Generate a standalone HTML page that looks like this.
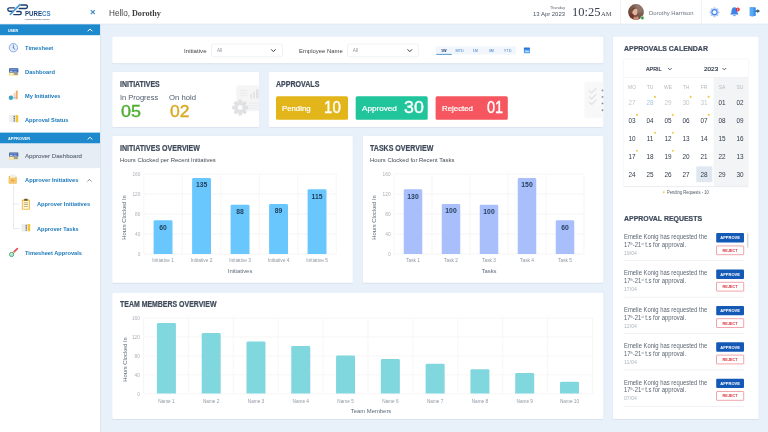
<!DOCTYPE html>
<html lang="en"><head><meta charset="utf-8"><title>PureCS Dashboard</title>
<style>
html,body{margin:0;padding:0;width:768px;height:432px;overflow:hidden;background:#e8f0fa;font-family:"Liberation Sans",sans-serif;}
#app{position:relative;width:768px;height:432px;overflow:hidden;will-change:transform;}
.t{position:absolute;white-space:nowrap;margin:0;padding:0;}
.r{position:absolute;}
.s{position:absolute;left:0;top:0;pointer-events:none;overflow:visible;}
.sup{font-size:45%;vertical-align:baseline;position:relative;top:-0.62em;line-height:0;}
</style></head><body><div id="app">
<svg class="s" width="768" height="432" viewBox="0 0 768 432"><rect x="0.00" y="0.00" width="768.00" height="432.00" fill="#e8f0fa"/><rect x="0.00" y="0.00" width="768.00" height="24.00" fill="#fff"/><rect x="0.00" y="23.70" width="768.00" height="0.70" fill="#dde5ef"/><rect x="0.00" y="24.00" width="100.00" height="408.00" fill="#fff"/><rect x="100.00" y="24.30" width="0.90" height="408.00" fill="#dfe4eb"/><rect x="0.00" y="24.30" width="100.00" height="10.90" fill="#1e89cd"/></svg>
<div class="t" style="left:8.00px;top:28.32px;font:700 4.30px/5.16px 'Liberation Sans',sans-serif;color:#fff;transform:scaleX(0.8370);transform-origin:0 3.68px;">USER</div>
<svg class="s" width="768" height="432" viewBox="0 0 768 432"><rect x="0.00" y="132.60" width="100.00" height="10.90" fill="#1e89cd"/></svg>
<div class="t" style="left:8.00px;top:136.32px;font:700 4.30px/5.16px 'Liberation Sans',sans-serif;color:#fff;transform:scaleX(0.9116);transform-origin:0 3.68px;">APPROVER</div>
<svg class="s" width="768" height="432"><path d="M88.00 31.00 L90.00 29.00 L92.00 31.00" fill="none" stroke="#fff" stroke-width="1.00" stroke-linecap="round" stroke-linejoin="round"/></svg>
<svg class="s" width="768" height="432"><path d="M88.00 139.20 L90.00 137.20 L92.00 139.20" fill="none" stroke="#fff" stroke-width="1.00" stroke-linecap="round" stroke-linejoin="round"/></svg>
<div class="t" style="left:25.00px;top:44.86px;font:700 5.90px/7.08px 'Liberation Sans',sans-serif;color:#1a78ba;transform:scaleX(0.9733);transform-origin:0 5.14px;">Timesheet</div>
<div class="t" style="left:25.00px;top:68.86px;font:700 5.90px/7.08px 'Liberation Sans',sans-serif;color:#1a78ba;transform:scaleX(0.9735);transform-origin:0 5.14px;">Dashboard</div>
<div class="t" style="left:25.00px;top:92.86px;font:700 5.90px/7.08px 'Liberation Sans',sans-serif;color:#1a78ba;transform:scaleX(0.9581);transform-origin:0 5.14px;">My Initiatives</div>
<div class="t" style="left:25.00px;top:116.86px;font:700 5.90px/7.08px 'Liberation Sans',sans-serif;color:#1a78ba;transform:scaleX(0.9615);transform-origin:0 5.14px;">Approval Status</div>
<svg class="s" width="768" height="432" viewBox="0 0 768 432"><rect x="0.00" y="143.60" width="100.00" height="24.60" fill="#e7edf5"/></svg>
<div class="t" style="left:25.00px;top:152.86px;font:400 5.90px/7.08px 'Liberation Sans',sans-serif;color:#65717e;transform:scaleX(1.0469);transform-origin:0 5.14px;-webkit-text-stroke:.15px currentColor;">Approver Dashboard</div>
<div class="t" style="left:25.00px;top:176.86px;font:700 5.90px/7.08px 'Liberation Sans',sans-serif;color:#1a78ba;transform:scaleX(0.9713);transform-origin:0 5.14px;">Approver Initiatives</div>
<svg class="s" width="768" height="432"><path d="M87.70 181.20 L89.50 179.40 L91.30 181.20" fill="none" stroke="#5d6b7a" stroke-width="0.80" stroke-linecap="round" stroke-linejoin="round"/></svg>
<div class="t" style="left:37.30px;top:200.86px;font:700 5.90px/7.08px 'Liberation Sans',sans-serif;color:#1a78ba;transform:scaleX(0.9658);transform-origin:0 5.14px;">Approver Initiatives</div>
<div class="t" style="left:37.30px;top:225.86px;font:700 5.90px/7.08px 'Liberation Sans',sans-serif;color:#1a78ba;transform:scaleX(0.9443);transform-origin:0 5.14px;">Approver Tasks</div>
<div class="t" style="left:25.00px;top:249.86px;font:700 5.90px/7.08px 'Liberation Sans',sans-serif;color:#1a78ba;transform:scaleX(0.9604);transform-origin:0 5.14px;">Timesheet Approvals</div>
<svg class="s" width="768" height="432" viewBox="0 0 768 432"><rect x="13.00" y="185.00" width="0.70" height="43.60" fill="#dde2e8"/><rect x="13.00" y="203.60" width="6.60" height="0.70" fill="#dde2e8"/><rect x="13.00" y="228.00" width="6.60" height="0.70" fill="#dde2e8"/></svg>
<svg class="s" width="768" height="432" viewBox="0 0 768 432"><g fill="none" stroke-linecap="round" stroke-linejoin="round"><path d="M14.4 7.8 H9.5 A1.7 1.7 0 0 0 9.5 11.2 H12.6" stroke="#1b3d70" stroke-width="1.35"/><path d="M20.8 5.0 H25.7 A1.75 1.75 0 0 1 25.7 8.5 H19.2" stroke="#1b3d70" stroke-width="1.35"/><path d="M16.8 11.5 H19.7 A1.55 1.55 0 0 1 19.7 14.6 H13.8" stroke="#1b3d70" stroke-width="1.35"/><path d="M10.3 14.3 L19.9 4.7" stroke="#4b9bd2" stroke-width="1.7"/></g><circle cx="13.4" cy="47.7" r="4.2" fill="#e6eefb" stroke="#6f9ae0" stroke-width=".8"/><path d="M13.4 45.1 V47.9 L15 49.3" fill="none" stroke="#4a79cb" stroke-width=".8" stroke-linecap="round"/><circle cx="13.4" cy="47.8" r=".6" fill="#3e68b8"/><rect x="9.10" y="68.30" width="9.2" height="7.2" rx=".5" fill="#f3d678"/><path d="M9.60 68.30 h8.2 a.5 .5 0 0 1 .5 .5 v3.7 h-9.2 v-3.7 a.5 .5 0 0 1 .5 -.5z" fill="#3b62b6"/><rect x="10.00" y="69.40" width="7.4" height=".7" fill="#8fabe6"/><rect x="10.00" y="70.80" width="2.6" height=".9" fill="#dfe8fa"/><rect x="13.50" y="70.80" width="3.2" height=".9" fill="#9db6ea"/><rect x="10.00" y="73.20" width="3.0" height="1.5" fill="#fdf3cf"/><rect x="14.30" y="73.20" width="1.4" height="1.5" fill="#4a73c6"/><rect x="16.20" y="73.20" width="1.3" height="1.5" fill="#4a73c6"/><rect x="11.6" y="94.6" width="1.7" height="4.6" fill="#f7e2d2"/><rect x="13.7" y="92.8" width="1.7" height="6.4" fill="#f5d3b8"/><rect x="15.8" y="90.6" width="1.9" height="8.6" fill="#f1a868"/><rect x="13.4" y="97" width="2.4" height="1.6" fill="#b9c6dc"/><circle cx="10.9" cy="97.7" r="2.2" fill="#3ba6cb"/><rect x="9.40" y="115.00" width="3.7" height="7.3" rx=".4" fill="#ededf0"/><rect x="13.30" y="115.00" width="2.0" height="7.3" fill="#cfd2d7"/><rect x="13.65" y="116.00" width="1.3" height="1.3" fill="#70757c"/><rect x="13.65" y="118.10" width="1.3" height="1.3" fill="#70757c"/><rect x="13.65" y="120.20" width="1.3" height="1.3" fill="#8a8e95"/><rect x="15.70" y="114.90" width="2.5" height="7.3" rx=".4" fill="#f4c52e"/><rect x="9.10" y="152.40" width="9.2" height="7.2" rx=".5" fill="#f3d678"/><path d="M9.60 152.40 h8.2 a.5 .5 0 0 1 .5 .5 v3.7 h-9.2 v-3.7 a.5 .5 0 0 1 .5 -.5z" fill="#3b62b6"/><rect x="10.00" y="153.50" width="7.4" height=".7" fill="#8fabe6"/><rect x="10.00" y="154.90" width="2.6" height=".9" fill="#dfe8fa"/><rect x="13.50" y="154.90" width="3.2" height=".9" fill="#9db6ea"/><rect x="10.00" y="157.30" width="3.0" height="1.5" fill="#fdf3cf"/><rect x="14.30" y="157.30" width="1.4" height="1.5" fill="#4a73c6"/><rect x="16.20" y="157.30" width="1.3" height="1.5" fill="#4a73c6"/><path d="M8.8 176 H11.4 L12.2 176.8 H16.6 V183.6 H8.8 Z" fill="#edb152"/><rect x="10" y="174.6" width="5.4" height="3.6" fill="#f3efe6"/><rect x="8.8" y="177.7" width="7.8" height="5.9" rx=".5" fill="#f6c56c"/><rect x="11.2" y="179.8" width="3" height="1.5" fill="#e3a548"/><rect x="21.8" y="199.6" width="8.2" height="10.2" rx=".7" fill="#f2c24a"/><rect x="22.9" y="201" width="6" height="7.8" fill="#fdf6dc"/><rect x="24.2" y="198.7" width="3.4" height="2.0" rx=".5" fill="#6b5a33"/><rect x="23.8" y="202.6" width="4.2" height=".6" fill="#9b8a57"/><rect x="23.8" y="204.3" width="4.2" height=".6" fill="#9b8a57"/><rect x="23.8" y="206.0" width="4.2" height=".6" fill="#9b8a57"/><rect x="21.40" y="224.10" width="3.7" height="7.3" rx=".4" fill="#ededf0"/><rect x="25.30" y="224.10" width="2.0" height="7.3" fill="#cfd2d7"/><rect x="25.65" y="225.10" width="1.3" height="1.3" fill="#70757c"/><rect x="25.65" y="227.20" width="1.3" height="1.3" fill="#70757c"/><rect x="25.65" y="229.30" width="1.3" height="1.3" fill="#8a8e95"/><rect x="27.70" y="224.00" width="2.5" height="7.3" rx=".4" fill="#f4c52e"/><path d="M13.8 252.2 L17.3 248.7" stroke="#e5524e" stroke-width="1.7" stroke-linecap="round"/><path d="M12.8 253.3 L13.8 252.2" stroke="#f2b96a" stroke-width="1.4" stroke-linecap="round"/><circle cx="11.6" cy="254.5" r="2.1" fill="#e6f7ee" stroke="#34a56c" stroke-width=".95"/><path d="M10.7 254.5 L11.4 255.2 L12.6 253.9" fill="none" stroke="#34a56c" stroke-width=".6"/></svg>
<div class="t" style="left:24.90px;top:10.86px;font:700 5.90px/7.08px 'Liberation Sans',sans-serif;color:#1c3f74;transform:scaleX(1.0411) scaleY(1.1400);transform-origin:0 5.14px;">PURE<span style="color:#3a80c4">CS</span></div>
<div class="t" style="left:24.30px;top:18.02px;font:400 2.30px/2.76px 'Liberation Sans',sans-serif;color:#2c3646;transform:scaleX(0.7751);transform-origin:0 1.98px;">A Thinking Technology Company</div>
<div class="t" style="left:108.50px;top:8.98px;font:400 8.20px/9.84px 'Liberation Sans',sans-serif;color:#444;transform:scaleX(1.0017);transform-origin:0 7.02px;">Hello,</div>
<div class="t" style="left:132.30px;top:8.98px;font:700 8.20px/9.84px 'Liberation Serif',serif;color:#3d3d3d;transform:scaleX(0.9929);transform-origin:0 7.02px;">Dorothy</div>
<div class="t" style="left:550.20px;top:5.56px;font:400 3.90px/4.68px 'Liberation Sans',sans-serif;color:#5a6270;transform:scaleX(0.9227);transform-origin:0 3.44px;">Thursday</div>
<div class="t" style="left:533.30px;top:10.80px;font:400 6.00px/7.20px 'Liberation Sans',sans-serif;color:#4a5260;transform:scaleX(0.9888);transform-origin:0 5.20px;">13 Apr 2023</div>
<div class="t" style="left:572.10px;top:4.84px;font:400 12.60px/15.12px 'Liberation Serif',serif;color:#39414e;transform:scaleX(0.9930);transform-origin:0 11.16px;">10:25</div>
<div class="t" style="left:600.90px;top:10.18px;font:400 6.20px/7.44px 'Liberation Serif',serif;color:#4a515d;transform:scaleX(1.0710);transform-origin:0 5.82px;">AM</div>
<svg class="s" width="768" height="432" viewBox="0 0 768 432"><rect x="620.20" y="0.00" width="0.60" height="24.00" fill="#e6e9ee"/><rect x="701.20" y="0.00" width="0.60" height="24.00" fill="#e6e9ee"/></svg>
<div class="t" style="left:648.70px;top:9.92px;font:400 5.80px/6.96px 'Liberation Sans',sans-serif;color:#6a7480;transform:scaleX(1.0151);transform-origin:0 5.08px;">Dorothy Harrison</div>
<svg class="s" width="768" height="432" viewBox="0 0 768 432"><defs><clipPath id="av"><circle cx="636" cy="12" r="7.9"/></clipPath><radialGradient id="avg" cx=".7" cy=".25" r=".9"><stop offset="0" stop-color="#a08a80"/><stop offset=".45" stop-color="#7a5a4c"/><stop offset="1" stop-color="#5c3326"/></radialGradient><filter id="avb" x="-20%" y="-20%" width="140%" height="140%"><feGaussianBlur stdDeviation=".55"/></filter></defs><g clip-path="url(#av)"><rect x="627" y="3" width="18" height="18" fill="url(#avg)"/><g filter="url(#avb)"><ellipse cx="634.8" cy="11.6" rx="2.7" ry="3.7" fill="#e2b39b"/><path d="M633 15.5 Q635.5 18.5 638 16 L639.5 21 H631Z" fill="#c98f78"/><path d="M631.4 10 Q633.5 6.2 638 8.4 Q635.6 8.2 634 9.6 Q632.6 10.6 632 13Z" fill="#6d4839"/><ellipse cx="639.6" cy="9" rx="2" ry="3.2" fill="#907468"/><ellipse cx="631.6" cy="16.5" rx="2.4" ry="3" fill="#74382a"/></g></g><rect x="640.9" y="16.3" width="3" height="3.2" rx=".8" fill="#2f9d3f" stroke="#f3fbf3" stroke-width=".5"/><g transform="translate(714.5 12.2)"><circle r="4.4" fill="#dbe8fc"/><rect x="-1" y="-5" width="2" height="2.2" rx=".5" fill="#b4cdf7" transform="rotate(0)"/><rect x="-1" y="-5" width="2" height="2.2" rx=".5" fill="#b4cdf7" transform="rotate(45)"/><rect x="-1" y="-5" width="2" height="2.2" rx=".5" fill="#b4cdf7" transform="rotate(90)"/><rect x="-1" y="-5" width="2" height="2.2" rx=".5" fill="#b4cdf7" transform="rotate(135)"/><rect x="-1" y="-5" width="2" height="2.2" rx=".5" fill="#b4cdf7" transform="rotate(180)"/><rect x="-1" y="-5" width="2" height="2.2" rx=".5" fill="#b4cdf7" transform="rotate(225)"/><rect x="-1" y="-5" width="2" height="2.2" rx=".5" fill="#b4cdf7" transform="rotate(270)"/><rect x="-1" y="-5" width="2" height="2.2" rx=".5" fill="#b4cdf7" transform="rotate(315)"/><circle r="3.1" fill="#4c88ea"/><circle r="1.9" fill="#f6f9ff"/></g><path d="M734.4 7.2 C731.6 7.2 731.6 10.6 731.4 12.2 C731.2 13.4 730.4 13.8 730.3 14.6 H738.6 C738.4 13.8 737.6 13.4 737.4 12.2 C737.2 10.6 737.2 7.2 734.4 7.2Z" fill="#3d83e6"/><path d="M733 15.2 A1.5 1.5 0 0 0 735.9 15.2Z" fill="#3d83e6"/><circle cx="737.8" cy="9.5" r="1.9" fill="#e0212b"/><rect x="737.4" y="8.5" width=".8" height="2" fill="#fff"/><path d="M749.8 7.3 H755 A.8 .8 0 0 1 755.8 8.1 V15.2 A.8 .8 0 0 1 755 16 H749.8Z" fill="#3f8fe8"/><path d="M749.8 7.3 L753.4 8.3 V16.8 L749.8 16Z" fill="#56adf4"/><path d="M755.4 10.2 H757.4 V8.9 L760 11.1 L757.4 13.3 V12 H755.4Z" fill="#3b647f"/></svg>
<svg class="s" width="768" height="432"><path d="M90.8 10.2 L94.8 14.2 M94.8 10.2 L90.8 14.2" stroke="#3a87c4" stroke-width="1.2" stroke-linecap="butt"/></svg>
<svg class="s" width="768" height="432" viewBox="0 0 768 432"><rect x="111.95" y="36.05" width="491.80" height="27.70" rx="1.3" fill="#dfe7f2"/><rect x="112.60" y="62.70" width="490.50" height="1.50" rx=".8" fill="#d8e1ed"/><rect x="112.30" y="36.40" width="491.10" height="26.90" rx="1.00" fill="#fff"/></svg>
<div class="t" style="left:184.20px;top:47.86px;font:400 5.90px/7.08px 'Liberation Sans',sans-serif;color:#444;transform:scaleX(1.0442);transform-origin:0 5.14px;">Initiative</div>
<svg class="s" width="768" height="432" viewBox="0 0 768 432"><rect x="211.60" y="44.10" width="70.80" height="12.80" rx="1.50" fill="#fff" stroke="#e3e7ec" stroke-width="0.60"/></svg>
<div class="t" style="left:217.00px;top:48.14px;font:400 4.60px/5.52px 'Liberation Sans',sans-serif;color:#8a8f96;">All</div>
<svg class="s" width="768" height="432"><path d="M271.40 49.60 L273.40 51.60 L275.40 49.60" fill="none" stroke="#3a3a3a" stroke-width="1.00" stroke-linecap="round" stroke-linejoin="round"/></svg>
<div class="t" style="left:299.00px;top:47.86px;font:400 5.90px/7.08px 'Liberation Sans',sans-serif;color:#444;transform:scaleX(1.0042);transform-origin:0 5.14px;">Employee Name</div>
<svg class="s" width="768" height="432" viewBox="0 0 768 432"><rect x="347.50" y="44.10" width="70.80" height="12.80" rx="1.50" fill="#fff" stroke="#e3e7ec" stroke-width="0.60"/></svg>
<div class="t" style="left:352.80px;top:48.14px;font:400 4.60px/5.52px 'Liberation Sans',sans-serif;color:#8a8f96;">All</div>
<svg class="s" width="768" height="432"><path d="M407.80 49.60 L409.80 51.60 L411.80 49.60" fill="none" stroke="#3a3a3a" stroke-width="1.00" stroke-linecap="round" stroke-linejoin="round"/></svg>
<svg class="s" width="768" height="432" viewBox="0 0 768 432"><rect x="435.60" y="46.30" width="80.40" height="8.20" fill="#f1f6fc"/></svg>
<div class="t" style="left:443.80px;top:49.12px;font:700 3.80px/4.56px 'Liberation Sans',sans-serif;color:#1f3d6b;transform:translateX(-50%);">1W</div>
<div class="t" style="left:459.60px;top:49.12px;font:400 3.80px/4.56px 'Liberation Sans',sans-serif;color:#3a7bc8;transform:translateX(-50%);">MTD</div>
<div class="t" style="left:475.40px;top:49.12px;font:400 3.80px/4.56px 'Liberation Sans',sans-serif;color:#3a7bc8;transform:translateX(-50%);">1M</div>
<div class="t" style="left:491.30px;top:49.12px;font:400 3.80px/4.56px 'Liberation Sans',sans-serif;color:#3a7bc8;transform:translateX(-50%);">3M</div>
<div class="t" style="left:507.60px;top:49.12px;font:400 3.80px/4.56px 'Liberation Sans',sans-serif;color:#3a7bc8;transform:translateX(-50%);">YTD</div>
<svg class="s" width="768" height="432" viewBox="0 0 768 432"><rect x="436.40" y="53.90" width="15.40" height="0.80" fill="#2f7fc0"/></svg>
<svg class="s" width="768" height="432" viewBox="0 0 768 432"><rect x="523.9" y="48.2" width="6" height="5.1" rx=".6" fill="#4aa0f0"/><rect x="523.9" y="47.6" width="6" height="1.8" rx=".5" fill="#2f74d2"/><rect x="525" y="50.6" width="3.8" height="1.6" fill="#bcdcfb"/></svg>
<svg class="s" width="768" height="432" viewBox="0 0 768 432"><rect x="111.95" y="71.75" width="147.60" height="55.60" rx="1.3" fill="#dfe7f2"/><rect x="112.60" y="126.30" width="146.30" height="1.50" rx=".8" fill="#d8e1ed"/><rect x="112.30" y="72.10" width="146.90" height="54.80" rx="1.00" fill="#fff"/></svg>
<div class="t" style="left:120.00px;top:79.98px;font:700 8.20px/9.84px 'Liberation Sans',sans-serif;color:#3f4a5b;transform:scaleX(0.8509);transform-origin:0 7.02px;-webkit-text-stroke:.22px currentColor;">INITIATIVES</div>
<div class="t" style="left:120.00px;top:93.34px;font:400 7.60px/9.12px 'Liberation Sans',sans-serif;color:#4d5b6b;transform:scaleX(0.9830);transform-origin:0 6.66px;">In Progress</div>
<div class="t" style="left:169.30px;top:93.34px;font:400 7.60px/9.12px 'Liberation Sans',sans-serif;color:#4d5b6b;transform:scaleX(1.0143);transform-origin:0 6.66px;">On hold</div>
<div class="t" style="left:120.50px;top:102.30px;font:400 16.00px/19.20px 'Liberation Sans',sans-serif;color:#4cad2e;transform:scaleX(1.1238);transform-origin:0 14.70px;-webkit-text-stroke:.35px currentColor;">05</div>
<div class="t" style="left:170.20px;top:102.30px;font:400 16.00px/19.20px 'Liberation Sans',sans-serif;color:#d9a91e;transform:scaleX(1.0957);transform-origin:0 14.70px;-webkit-text-stroke:.35px currentColor;">02</div>
<svg class="s" width="768" height="432" viewBox="0 0 768 432"><g opacity="1"><rect x="236.4" y="85.6" width="22.8" height="25.6" rx="1" fill="#f5f5f6"/><rect x="240" y="90" width="7.4" height="1" fill="#e9eaec"/><rect x="240" y="92.6" width="7.4" height="1" fill="#e9eaec"/><rect x="240" y="95.2" width="7.4" height="1" fill="#e9eaec"/><rect x="250" y="94" width="2" height="4.6" fill="#e4e5e7"/><rect x="253" y="92" width="2" height="6.6" fill="#e4e5e7"/><rect x="256" y="89.4" width="2.6" height="9.2" fill="#e1e2e4"/><rect x="249" y="102.6" width="10" height="1" fill="#e9eaec"/><rect x="249" y="105.4" width="10" height="1" fill="#e9eaec"/><rect x="249" y="108" width="10" height="1" fill="#ecedef"/><g transform="translate(240.2 107.6)"><rect x="-1.8" y="-8" width="3.6" height="4" rx=".8" fill="#e0e1e3" transform="rotate(0)"/><rect x="-1.8" y="-8" width="3.6" height="4" rx=".8" fill="#e0e1e3" transform="rotate(45)"/><rect x="-1.8" y="-8" width="3.6" height="4" rx=".8" fill="#e0e1e3" transform="rotate(90)"/><rect x="-1.8" y="-8" width="3.6" height="4" rx=".8" fill="#e0e1e3" transform="rotate(135)"/><rect x="-1.8" y="-8" width="3.6" height="4" rx=".8" fill="#e0e1e3" transform="rotate(180)"/><rect x="-1.8" y="-8" width="3.6" height="4" rx=".8" fill="#e0e1e3" transform="rotate(225)"/><rect x="-1.8" y="-8" width="3.6" height="4" rx=".8" fill="#e0e1e3" transform="rotate(270)"/><rect x="-1.8" y="-8" width="3.6" height="4" rx=".8" fill="#e0e1e3" transform="rotate(315)"/><circle r="5.8" fill="#e0e1e3"/><circle r="2.5" fill="#fbfbfc"/></g></g></svg>
<svg class="s" width="768" height="432" viewBox="0 0 768 432"><rect x="268.35" y="71.75" width="335.40" height="55.60" rx="1.3" fill="#dfe7f2"/><rect x="269.00" y="126.30" width="334.10" height="1.50" rx=".8" fill="#d8e1ed"/><rect x="268.70" y="72.10" width="334.70" height="54.80" rx="1.00" fill="#fff"/></svg>
<div class="t" style="left:276.00px;top:79.98px;font:700 8.20px/9.84px 'Liberation Sans',sans-serif;color:#3f4a5b;transform:scaleX(0.8607);transform-origin:0 7.02px;-webkit-text-stroke:.22px currentColor;">APPROVALS</div>
<svg class="s" width="768" height="432" viewBox="0 0 768 432"><rect x="276.00" y="96.20" width="72.00" height="23.60" rx="1.60" fill="#e2b61a"/></svg>
<div class="t" style="left:281.80px;top:104.82px;font:400 6.80px/8.16px 'Liberation Sans',sans-serif;color:#fff;transform:scaleX(1.1460);transform-origin:0 6.18px;-webkit-text-stroke:.2px #fff;">Pending</div>
<div class="t" style="left:323.50px;top:98.54px;font:400 15.60px/18.72px 'Liberation Sans',sans-serif;color:#fff;transform:scaleX(0.9682);transform-origin:0 14.46px;-webkit-text-stroke:.35px #fff;">10</div>
<svg class="s" width="768" height="432" viewBox="0 0 768 432"><rect x="355.70" y="96.20" width="72.00" height="23.60" rx="1.60" fill="#20c59b"/></svg>
<div class="t" style="left:362.00px;top:104.82px;font:400 6.80px/8.16px 'Liberation Sans',sans-serif;color:#fff;transform:scaleX(1.1955);transform-origin:0 6.18px;-webkit-text-stroke:.2px #fff;">Approved</div>
<div class="t" style="left:403.60px;top:98.54px;font:400 15.60px/18.72px 'Liberation Sans',sans-serif;color:#fff;transform:scaleX(1.1410);transform-origin:0 14.46px;-webkit-text-stroke:.35px #fff;">30</div>
<svg class="s" width="768" height="432" viewBox="0 0 768 432"><rect x="435.60" y="96.20" width="72.20" height="23.60" rx="1.60" fill="#f5565f"/></svg>
<div class="t" style="left:442.00px;top:104.82px;font:400 6.80px/8.16px 'Liberation Sans',sans-serif;color:#fff;transform:scaleX(1.1550);transform-origin:0 6.18px;-webkit-text-stroke:.2px #fff;">Rejected</div>
<div class="t" style="left:487.00px;top:98.54px;font:400 15.60px/18.72px 'Liberation Sans',sans-serif;color:#fff;transform:scaleX(0.9336);transform-origin:0 14.46px;-webkit-text-stroke:.35px #fff;">01</div>
<svg class="s" width="768" height="432" viewBox="0 0 768 432"><rect x="584.4" y="81.8" width="19" height="36.2" fill="#f8f8f9"/><path d="M589.4 91.0 L591.6 93.0 L596 88.6" fill="none" stroke="#e3e4e6" stroke-width="1.4" stroke-linecap="round" stroke-linejoin="round"/><path d="M589.4 96.9 L591.6 98.9 L596 94.5" fill="none" stroke="#e3e4e6" stroke-width="1.4" stroke-linecap="round" stroke-linejoin="round"/><path d="M589.4 102.6 L591.6 104.6 L596 100.2" fill="none" stroke="#e3e4e6" stroke-width="1.4" stroke-linecap="round" stroke-linejoin="round"/><circle cx="602.5" cy="90.4" r=".95" fill="#8f939a"/><circle cx="602.5" cy="96.9" r=".95" fill="#8f939a"/><circle cx="602.5" cy="103.4" r=".95" fill="#8f939a"/><circle cx="602.5" cy="110.2" r=".95" fill="#8f939a"/></svg>
<svg class="s" width="768" height="432" viewBox="0 0 768 432"><rect x="111.95" y="135.75" width="241.20" height="147.50" rx="1.3" fill="#dfe7f2"/><rect x="112.60" y="282.20" width="239.90" height="1.50" rx=".8" fill="#d8e1ed"/><rect x="112.30" y="136.10" width="240.50" height="146.70" rx="1.00" fill="#fff"/></svg>
<div class="t" style="left:120.00px;top:143.98px;font:700 8.20px/9.84px 'Liberation Sans',sans-serif;color:#3f4a5b;transform:scaleX(0.8593);transform-origin:0 7.02px;-webkit-text-stroke:.22px currentColor;">INITIATIVES OVERVIEW</div>
<div class="t" style="left:120.00px;top:157.04px;font:400 5.60px/6.72px 'Liberation Sans',sans-serif;color:#444c56;transform:scaleX(1.0577);transform-origin:0 4.96px;">Hours Clocked per Recent Initiatives</div>
<svg class="s" width="768" height="432" viewBox="0 0 768 432"><rect x="143.80" y="173.50" width="192.50" height="1.00" fill="#f8f6f5"/></svg>
<div class="t" style="right:627.60px;top:172.02px;font:400 4.80px/5.76px 'Liberation Sans',sans-serif;color:#abb1b9;">160</div>
<svg class="s" width="768" height="432" viewBox="0 0 768 432"><rect x="143.80" y="193.50" width="192.50" height="1.00" fill="#f8f6f5"/></svg>
<div class="t" style="right:627.60px;top:192.02px;font:400 4.80px/5.76px 'Liberation Sans',sans-serif;color:#abb1b9;">120</div>
<svg class="s" width="768" height="432" viewBox="0 0 768 432"><rect x="143.80" y="213.50" width="192.50" height="1.00" fill="#f8f6f5"/></svg>
<div class="t" style="right:627.60px;top:212.02px;font:400 4.80px/5.76px 'Liberation Sans',sans-serif;color:#abb1b9;">80</div>
<svg class="s" width="768" height="432" viewBox="0 0 768 432"><rect x="143.80" y="233.50" width="192.50" height="1.00" fill="#f8f6f5"/></svg>
<div class="t" style="right:627.60px;top:232.02px;font:400 4.80px/5.76px 'Liberation Sans',sans-serif;color:#abb1b9;">40</div>
<svg class="s" width="768" height="432" viewBox="0 0 768 432"><rect x="143.80" y="253.50" width="192.50" height="1.00" fill="#f8f6f5"/></svg>
<div class="t" style="right:627.60px;top:252.02px;font:400 4.80px/5.76px 'Liberation Sans',sans-serif;color:#abb1b9;">0</div>
<svg class="s" width="768" height="432" viewBox="0 0 768 432"><rect x="143.30" y="174.00" width="1.00" height="80.00" fill="#f8f6f5"/><rect x="181.80" y="174.00" width="1.00" height="80.00" fill="#f8f6f5"/><rect x="220.30" y="174.00" width="1.00" height="80.00" fill="#f8f6f5"/><rect x="258.80" y="174.00" width="1.00" height="80.00" fill="#f8f6f5"/><rect x="297.30" y="174.00" width="1.00" height="80.00" fill="#f8f6f5"/><rect x="335.80" y="174.00" width="1.00" height="80.00" fill="#f8f6f5"/></svg>
<div class="t" style="left:123.90px;top:213.92px;font:400 5.80px/6.96px 'Liberation Sans',sans-serif;color:#5c6b7c;transform:translateX(-50%) rotate(-90deg);">Hours Clocked In</div>
<svg class="s" width="768" height="432" viewBox="0 0 768 432"><path d="M153.60 254.00 V221.70 Q153.60 220.30 155.00 220.30 H171.10 Q172.50 220.30 172.50 221.70 V254.00 Z" fill="#6ac7fe"/></svg>
<div class="t" style="left:163.05px;top:223.82px;font:700 6.80px/8.16px 'Liberation Sans',sans-serif;color:#1f3b57;transform:translateX(-50%);">60</div>
<div class="t" style="left:163.05px;top:258.02px;font:400 4.80px/5.76px 'Liberation Sans',sans-serif;color:#8f98a2;transform:translateX(-50%);">Initiative 1</div>
<svg class="s" width="768" height="432" viewBox="0 0 768 432"><path d="M192.10 254.00 V179.40 Q192.10 178.00 193.50 178.00 H209.60 Q211.00 178.00 211.00 179.40 V254.00 Z" fill="#6ac7fe"/></svg>
<div class="t" style="left:201.55px;top:180.82px;font:700 6.80px/8.16px 'Liberation Sans',sans-serif;color:#1f3b57;transform:translateX(-50%);">135</div>
<div class="t" style="left:201.55px;top:258.02px;font:400 4.80px/5.76px 'Liberation Sans',sans-serif;color:#8f98a2;transform:translateX(-50%);">Initiative 2</div>
<svg class="s" width="768" height="432" viewBox="0 0 768 432"><path d="M230.60 254.00 V206.10 Q230.60 204.70 232.00 204.70 H248.10 Q249.50 204.70 249.50 206.10 V254.00 Z" fill="#6ac7fe"/></svg>
<div class="t" style="left:240.05px;top:207.82px;font:700 6.80px/8.16px 'Liberation Sans',sans-serif;color:#1f3b57;transform:translateX(-50%);">88</div>
<div class="t" style="left:240.05px;top:258.02px;font:400 4.80px/5.76px 'Liberation Sans',sans-serif;color:#8f98a2;transform:translateX(-50%);">Initiative 3</div>
<svg class="s" width="768" height="432" viewBox="0 0 768 432"><path d="M269.10 254.00 V205.40 Q269.10 204.00 270.50 204.00 H286.60 Q288.00 204.00 288.00 205.40 V254.00 Z" fill="#6ac7fe"/></svg>
<div class="t" style="left:278.55px;top:206.82px;font:700 6.80px/8.16px 'Liberation Sans',sans-serif;color:#1f3b57;transform:translateX(-50%);">89</div>
<div class="t" style="left:278.55px;top:258.02px;font:400 4.80px/5.76px 'Liberation Sans',sans-serif;color:#8f98a2;transform:translateX(-50%);">Initiative 4</div>
<svg class="s" width="768" height="432" viewBox="0 0 768 432"><path d="M307.60 254.00 V190.60 Q307.60 189.20 309.00 189.20 H325.10 Q326.50 189.20 326.50 190.60 V254.00 Z" fill="#6ac7fe"/></svg>
<div class="t" style="left:317.05px;top:192.82px;font:700 6.80px/8.16px 'Liberation Sans',sans-serif;color:#1f3b57;transform:translateX(-50%);">115</div>
<div class="t" style="left:317.05px;top:258.02px;font:400 4.80px/5.76px 'Liberation Sans',sans-serif;color:#8f98a2;transform:translateX(-50%);">Initiative 5</div>
<div class="t" style="left:240.05px;top:267.86px;font:400 5.90px/7.08px 'Liberation Sans',sans-serif;color:#5c6b7c;transform:translateX(-50%);">Initiatives</div>
<svg class="s" width="768" height="432" viewBox="0 0 768 432"><rect x="362.55" y="135.75" width="241.20" height="147.50" rx="1.3" fill="#dfe7f2"/><rect x="363.20" y="282.20" width="239.90" height="1.50" rx=".8" fill="#d8e1ed"/><rect x="362.90" y="136.10" width="240.50" height="146.70" rx="1.00" fill="#fff"/></svg>
<div class="t" style="left:369.90px;top:143.98px;font:700 8.20px/9.84px 'Liberation Sans',sans-serif;color:#3f4a5b;transform:scaleX(0.8625);transform-origin:0 7.02px;-webkit-text-stroke:.22px currentColor;">TASKS OVERVIEW</div>
<div class="t" style="left:369.90px;top:157.04px;font:400 5.60px/6.72px 'Liberation Sans',sans-serif;color:#444c56;transform:scaleX(1.0578);transform-origin:0 4.96px;">Hours Clocked for Recent Tasks</div>
<svg class="s" width="768" height="432" viewBox="0 0 768 432"><rect x="394.00" y="173.50" width="190.00" height="1.00" fill="#f8f6f5"/></svg>
<div class="t" style="right:377.40px;top:172.02px;font:400 4.80px/5.76px 'Liberation Sans',sans-serif;color:#abb1b9;">160</div>
<svg class="s" width="768" height="432" viewBox="0 0 768 432"><rect x="394.00" y="193.50" width="190.00" height="1.00" fill="#f8f6f5"/></svg>
<div class="t" style="right:377.40px;top:192.02px;font:400 4.80px/5.76px 'Liberation Sans',sans-serif;color:#abb1b9;">120</div>
<svg class="s" width="768" height="432" viewBox="0 0 768 432"><rect x="394.00" y="213.50" width="190.00" height="1.00" fill="#f8f6f5"/></svg>
<div class="t" style="right:377.40px;top:212.02px;font:400 4.80px/5.76px 'Liberation Sans',sans-serif;color:#abb1b9;">80</div>
<svg class="s" width="768" height="432" viewBox="0 0 768 432"><rect x="394.00" y="233.50" width="190.00" height="1.00" fill="#f8f6f5"/></svg>
<div class="t" style="right:377.40px;top:232.02px;font:400 4.80px/5.76px 'Liberation Sans',sans-serif;color:#abb1b9;">40</div>
<svg class="s" width="768" height="432" viewBox="0 0 768 432"><rect x="394.00" y="253.50" width="190.00" height="1.00" fill="#f8f6f5"/></svg>
<div class="t" style="right:377.40px;top:252.02px;font:400 4.80px/5.76px 'Liberation Sans',sans-serif;color:#abb1b9;">0</div>
<svg class="s" width="768" height="432" viewBox="0 0 768 432"><rect x="393.50" y="174.00" width="1.00" height="80.00" fill="#f8f6f5"/><rect x="431.50" y="174.00" width="1.00" height="80.00" fill="#f8f6f5"/><rect x="469.50" y="174.00" width="1.00" height="80.00" fill="#f8f6f5"/><rect x="507.50" y="174.00" width="1.00" height="80.00" fill="#f8f6f5"/><rect x="545.50" y="174.00" width="1.00" height="80.00" fill="#f8f6f5"/><rect x="583.50" y="174.00" width="1.00" height="80.00" fill="#f8f6f5"/></svg>
<div class="t" style="left:373.80px;top:213.92px;font:400 5.80px/6.96px 'Liberation Sans',sans-serif;color:#5c6b7c;transform:translateX(-50%) rotate(-90deg);">Hours Clocked In</div>
<svg class="s" width="768" height="432" viewBox="0 0 768 432"><path d="M403.75 254.00 V190.60 Q403.75 189.20 405.15 189.20 H420.85 Q422.25 189.20 422.25 190.60 V254.00 Z" fill="#a8bffc"/></svg>
<div class="t" style="left:413.00px;top:192.82px;font:700 6.80px/8.16px 'Liberation Sans',sans-serif;color:#1f3b57;transform:translateX(-50%);">130</div>
<div class="t" style="left:413.00px;top:258.02px;font:400 4.80px/5.76px 'Liberation Sans',sans-serif;color:#8f98a2;transform:translateX(-50%);">Task 1</div>
<svg class="s" width="768" height="432" viewBox="0 0 768 432"><path d="M441.75 254.00 V205.40 Q441.75 204.00 443.15 204.00 H458.85 Q460.25 204.00 460.25 205.40 V254.00 Z" fill="#a8bffc"/></svg>
<div class="t" style="left:451.00px;top:206.82px;font:700 6.80px/8.16px 'Liberation Sans',sans-serif;color:#1f3b57;transform:translateX(-50%);">100</div>
<div class="t" style="left:451.00px;top:258.02px;font:400 4.80px/5.76px 'Liberation Sans',sans-serif;color:#8f98a2;transform:translateX(-50%);">Task 2</div>
<svg class="s" width="768" height="432" viewBox="0 0 768 432"><path d="M479.75 254.00 V206.10 Q479.75 204.70 481.15 204.70 H496.85 Q498.25 204.70 498.25 206.10 V254.00 Z" fill="#a8bffc"/></svg>
<div class="t" style="left:489.00px;top:207.82px;font:700 6.80px/8.16px 'Liberation Sans',sans-serif;color:#1f3b57;transform:translateX(-50%);">100</div>
<div class="t" style="left:489.00px;top:258.02px;font:400 4.80px/5.76px 'Liberation Sans',sans-serif;color:#8f98a2;transform:translateX(-50%);">Task 3</div>
<svg class="s" width="768" height="432" viewBox="0 0 768 432"><path d="M517.75 254.00 V179.40 Q517.75 178.00 519.15 178.00 H534.85 Q536.25 178.00 536.25 179.40 V254.00 Z" fill="#a8bffc"/></svg>
<div class="t" style="left:527.00px;top:180.82px;font:700 6.80px/8.16px 'Liberation Sans',sans-serif;color:#1f3b57;transform:translateX(-50%);">150</div>
<div class="t" style="left:527.00px;top:258.02px;font:400 4.80px/5.76px 'Liberation Sans',sans-serif;color:#8f98a2;transform:translateX(-50%);">Task 4</div>
<svg class="s" width="768" height="432" viewBox="0 0 768 432"><path d="M555.75 254.00 V221.70 Q555.75 220.30 557.15 220.30 H572.85 Q574.25 220.30 574.25 221.70 V254.00 Z" fill="#a8bffc"/></svg>
<div class="t" style="left:565.00px;top:223.82px;font:700 6.80px/8.16px 'Liberation Sans',sans-serif;color:#1f3b57;transform:translateX(-50%);">60</div>
<div class="t" style="left:565.00px;top:258.02px;font:400 4.80px/5.76px 'Liberation Sans',sans-serif;color:#8f98a2;transform:translateX(-50%);">Task 5</div>
<div class="t" style="left:489.00px;top:267.86px;font:400 5.90px/7.08px 'Liberation Sans',sans-serif;color:#5c6b7c;transform:translateX(-50%);">Tasks</div>
<svg class="s" width="768" height="432" viewBox="0 0 768 432"><rect x="111.95" y="292.45" width="491.80" height="127.00" rx="1.3" fill="#dfe7f2"/><rect x="112.60" y="418.40" width="490.50" height="1.50" rx=".8" fill="#d8e1ed"/><rect x="112.30" y="292.80" width="491.10" height="126.20" rx="1.00" fill="#fff"/></svg>
<div class="t" style="left:120.00px;top:299.98px;font:700 8.20px/9.84px 'Liberation Sans',sans-serif;color:#3f4a5b;transform:scaleX(0.8492);transform-origin:0 7.02px;-webkit-text-stroke:.22px currentColor;">TEAM MEMBERS OVERVIEW</div>
<svg class="s" width="768" height="432" viewBox="0 0 768 432"><rect x="143.50" y="317.50" width="449.00" height="1.00" fill="#f8f6f5"/></svg>
<div class="t" style="right:628.10px;top:316.02px;font:400 4.80px/5.76px 'Liberation Sans',sans-serif;color:#abb1b9;">160</div>
<svg class="s" width="768" height="432" viewBox="0 0 768 432"><rect x="143.50" y="336.45" width="449.00" height="1.00" fill="#f8f6f5"/></svg>
<div class="t" style="right:628.10px;top:335.02px;font:400 4.80px/5.76px 'Liberation Sans',sans-serif;color:#abb1b9;">120</div>
<svg class="s" width="768" height="432" viewBox="0 0 768 432"><rect x="143.50" y="355.40" width="449.00" height="1.00" fill="#f8f6f5"/></svg>
<div class="t" style="right:628.10px;top:354.02px;font:400 4.80px/5.76px 'Liberation Sans',sans-serif;color:#abb1b9;">80</div>
<svg class="s" width="768" height="432" viewBox="0 0 768 432"><rect x="143.50" y="374.35" width="449.00" height="1.00" fill="#f8f6f5"/></svg>
<div class="t" style="right:628.10px;top:373.02px;font:400 4.80px/5.76px 'Liberation Sans',sans-serif;color:#abb1b9;">40</div>
<svg class="s" width="768" height="432" viewBox="0 0 768 432"><rect x="143.50" y="393.30" width="449.00" height="1.00" fill="#f8f6f5"/></svg>
<div class="t" style="right:628.10px;top:392.02px;font:400 4.80px/5.76px 'Liberation Sans',sans-serif;color:#abb1b9;">0</div>
<svg class="s" width="768" height="432" viewBox="0 0 768 432"><rect x="143.00" y="318.00" width="1.00" height="75.80" fill="#f8f6f5"/><rect x="187.90" y="318.00" width="1.00" height="75.80" fill="#f8f6f5"/><rect x="232.80" y="318.00" width="1.00" height="75.80" fill="#f8f6f5"/><rect x="277.70" y="318.00" width="1.00" height="75.80" fill="#f8f6f5"/><rect x="322.60" y="318.00" width="1.00" height="75.80" fill="#f8f6f5"/><rect x="367.50" y="318.00" width="1.00" height="75.80" fill="#f8f6f5"/><rect x="412.40" y="318.00" width="1.00" height="75.80" fill="#f8f6f5"/><rect x="457.30" y="318.00" width="1.00" height="75.80" fill="#f8f6f5"/><rect x="502.20" y="318.00" width="1.00" height="75.80" fill="#f8f6f5"/><rect x="547.10" y="318.00" width="1.00" height="75.80" fill="#f8f6f5"/><rect x="592.00" y="318.00" width="1.00" height="75.80" fill="#f8f6f5"/></svg>
<div class="t" style="left:124.60px;top:355.92px;font:400 5.80px/6.96px 'Liberation Sans',sans-serif;color:#5c6b7c;transform:translateX(-50%) rotate(-90deg);">Hours Clocked In</div>
<svg class="s" width="768" height="432" viewBox="0 0 768 432"><path d="M156.90 393.60 V324.30 Q156.90 322.90 158.30 322.90 H174.50 Q175.90 322.90 175.90 324.30 V393.60 Z" fill="#80d7de"/></svg>
<div class="t" style="left:166.40px;top:399.08px;font:400 4.70px/5.64px 'Liberation Sans',sans-serif;color:#8f98a2;transform:translateX(-50%);">Name 1</div>
<svg class="s" width="768" height="432" viewBox="0 0 768 432"><path d="M201.69 393.60 V334.50 Q201.69 333.10 203.09 333.10 H219.29 Q220.69 333.10 220.69 334.50 V393.60 Z" fill="#80d7de"/></svg>
<div class="t" style="left:211.19px;top:399.08px;font:400 4.70px/5.64px 'Liberation Sans',sans-serif;color:#8f98a2;transform:translateX(-50%);">Name 2</div>
<svg class="s" width="768" height="432" viewBox="0 0 768 432"><path d="M246.48 393.60 V343.00 Q246.48 341.60 247.88 341.60 H264.08 Q265.48 341.60 265.48 343.00 V393.60 Z" fill="#80d7de"/></svg>
<div class="t" style="left:255.98px;top:399.08px;font:400 4.70px/5.64px 'Liberation Sans',sans-serif;color:#8f98a2;transform:translateX(-50%);">Name 3</div>
<svg class="s" width="768" height="432" viewBox="0 0 768 432"><path d="M291.27 393.60 V347.40 Q291.27 346.00 292.67 346.00 H308.87 Q310.27 346.00 310.27 347.40 V393.60 Z" fill="#80d7de"/></svg>
<div class="t" style="left:300.77px;top:399.08px;font:400 4.70px/5.64px 'Liberation Sans',sans-serif;color:#8f98a2;transform:translateX(-50%);">Name 4</div>
<svg class="s" width="768" height="432" viewBox="0 0 768 432"><path d="M336.06 393.60 V356.90 Q336.06 355.50 337.46 355.50 H353.66 Q355.06 355.50 355.06 356.90 V393.60 Z" fill="#80d7de"/></svg>
<div class="t" style="left:345.56px;top:399.08px;font:400 4.70px/5.64px 'Liberation Sans',sans-serif;color:#8f98a2;transform:translateX(-50%);">Name 5</div>
<svg class="s" width="768" height="432" viewBox="0 0 768 432"><path d="M380.85 393.60 V360.30 Q380.85 358.90 382.25 358.90 H398.45 Q399.85 358.90 399.85 360.30 V393.60 Z" fill="#80d7de"/></svg>
<div class="t" style="left:390.35px;top:399.08px;font:400 4.70px/5.64px 'Liberation Sans',sans-serif;color:#8f98a2;transform:translateX(-50%);">Name 6</div>
<svg class="s" width="768" height="432" viewBox="0 0 768 432"><path d="M425.64 393.60 V365.10 Q425.64 363.70 427.04 363.70 H443.24 Q444.64 363.70 444.64 365.10 V393.60 Z" fill="#80d7de"/></svg>
<div class="t" style="left:435.14px;top:399.08px;font:400 4.70px/5.64px 'Liberation Sans',sans-serif;color:#8f98a2;transform:translateX(-50%);">Name 7</div>
<svg class="s" width="768" height="432" viewBox="0 0 768 432"><path d="M470.43 393.60 V370.60 Q470.43 369.20 471.83 369.20 H488.03 Q489.43 369.20 489.43 370.60 V393.60 Z" fill="#80d7de"/></svg>
<div class="t" style="left:479.93px;top:399.08px;font:400 4.70px/5.64px 'Liberation Sans',sans-serif;color:#8f98a2;transform:translateX(-50%);">Name 8</div>
<svg class="s" width="768" height="432" viewBox="0 0 768 432"><path d="M515.22 393.60 V374.30 Q515.22 372.90 516.62 372.90 H532.82 Q534.22 372.90 534.22 374.30 V393.60 Z" fill="#80d7de"/></svg>
<div class="t" style="left:524.72px;top:399.08px;font:400 4.70px/5.64px 'Liberation Sans',sans-serif;color:#8f98a2;transform:translateX(-50%);">Name 9</div>
<svg class="s" width="768" height="432" viewBox="0 0 768 432"><path d="M560.01 393.60 V383.10 Q560.01 381.70 561.41 381.70 H577.61 Q579.01 381.70 579.01 383.10 V393.60 Z" fill="#80d7de"/></svg>
<div class="t" style="left:569.51px;top:399.08px;font:400 4.70px/5.64px 'Liberation Sans',sans-serif;color:#8f98a2;transform:translateX(-50%);">Name 10</div>
<div class="t" style="left:371.00px;top:407.86px;font:400 5.90px/7.08px 'Liberation Sans',sans-serif;color:#5c6b7c;transform:translateX(-50%);">Team Members</div>
<svg class="s" width="768" height="432" viewBox="0 0 768 432"><rect x="612.65" y="36.05" width="146.30" height="383.40" rx="1.3" fill="#dfe7f2"/><rect x="613.30" y="418.40" width="145.00" height="1.50" rx=".8" fill="#d8e1ed"/><rect x="613.00" y="36.40" width="145.60" height="382.60" rx="1.00" fill="#fff"/></svg>
<div class="t" style="left:624.20px;top:44.34px;font:700 7.60px/9.12px 'Liberation Sans',sans-serif;color:#3f4a5b;transform:scaleX(0.9181);transform-origin:0 6.66px;-webkit-text-stroke:.22px currentColor;">APPROVALS CALENDAR</div>
<svg class="s" width="768" height="432" viewBox="0 0 768 432"><rect x="622.80" y="58.20" width="126.40" height="129.40" rx="1.5" fill="rgba(70,90,120,.025)"/><rect x="623.40" y="58.80" width="125.20" height="128.20" rx="1" fill="rgba(70,90,120,.03)"/><rect x="624.00" y="59.40" width="124.00" height="127.00" fill="#fff"/><rect x="713.60" y="77.40" width="34.40" height="108.80" fill="#f3f4f6"/><rect x="624.00" y="77.10" width="124.00" height="0.60" fill="#eceef2"/><rect x="624.00" y="186.20" width="124.00" height="0.60" fill="#e4e7ec"/></svg>
<div class="t" style="left:645.80px;top:65.80px;font:400 6.00px/7.20px 'Liberation Sans',sans-serif;color:#2f3a4a;transform:scaleX(0.8938);transform-origin:0 5.20px;-webkit-text-stroke:.18px currentColor;">APRIL</div>
<svg class="s" width="768" height="432"><path d="M668.20 68.30 L669.80 69.90 L671.40 68.30" fill="none" stroke="#2f3a4a" stroke-width="0.80" stroke-linecap="round" stroke-linejoin="round"/></svg>
<div class="t" style="left:704.20px;top:65.80px;font:400 6.00px/7.20px 'Liberation Sans',sans-serif;color:#2f3a4a;transform:scaleX(1.0638);transform-origin:0 5.20px;-webkit-text-stroke:.18px currentColor;">2023</div>
<svg class="s" width="768" height="432"><path d="M722.70 68.30 L724.30 69.90 L725.90 68.30" fill="none" stroke="#2f3a4a" stroke-width="0.80" stroke-linecap="round" stroke-linejoin="round"/></svg>
<div class="t" style="left:632.00px;top:84.04px;font:400 5.60px/6.72px 'Liberation Sans',sans-serif;color:#b3b9c1;transform:translateX(-50%) scaleX(0.8800);">MO</div>
<div class="t" style="left:650.00px;top:84.04px;font:400 5.60px/6.72px 'Liberation Sans',sans-serif;color:#b3b9c1;transform:translateX(-50%) scaleX(0.8800);">TU</div>
<div class="t" style="left:667.80px;top:84.04px;font:400 5.60px/6.72px 'Liberation Sans',sans-serif;color:#b3b9c1;transform:translateX(-50%) scaleX(0.8800);">WE</div>
<div class="t" style="left:685.70px;top:84.04px;font:400 5.60px/6.72px 'Liberation Sans',sans-serif;color:#b3b9c1;transform:translateX(-50%) scaleX(0.8800);">TH</div>
<div class="t" style="left:703.70px;top:84.04px;font:400 5.60px/6.72px 'Liberation Sans',sans-serif;color:#b3b9c1;transform:translateX(-50%) scaleX(0.8800);">FR</div>
<div class="t" style="left:721.50px;top:84.04px;font:400 5.60px/6.72px 'Liberation Sans',sans-serif;color:#b3b9c1;transform:translateX(-50%) scaleX(0.8800);">SA</div>
<div class="t" style="left:739.50px;top:84.04px;font:400 5.60px/6.72px 'Liberation Sans',sans-serif;color:#b3b9c1;transform:translateX(-50%) scaleX(0.8800);">SU</div>
<svg class="s" width="768" height="432" viewBox="0 0 768 432"><rect x="696.30" y="166.40" width="16.00" height="15.80" fill="#dfe7f1"/></svg>
<div class="t" style="left:632.00px;top:99.14px;font:400 7.10px/8.52px 'Liberation Sans',sans-serif;color:#c3c8cf;transform:translateX(-50%) scaleX(0.9000);">27</div>
<div class="t" style="left:650.00px;top:99.14px;font:400 7.10px/8.52px 'Liberation Sans',sans-serif;color:#a9c3e6;transform:translateX(-50%) scaleX(0.9000);">28</div>
<div class="t" style="left:667.80px;top:99.14px;font:400 7.10px/8.52px 'Liberation Sans',sans-serif;color:#c3c8cf;transform:translateX(-50%) scaleX(0.9000);">29</div>
<div class="t" style="left:685.70px;top:99.14px;font:400 7.10px/8.52px 'Liberation Sans',sans-serif;color:#c3c8cf;transform:translateX(-50%) scaleX(0.9000);">30</div>
<div class="t" style="left:703.70px;top:99.14px;font:400 7.10px/8.52px 'Liberation Sans',sans-serif;color:#c3c8cf;transform:translateX(-50%) scaleX(0.9000);">31</div>
<div class="t" style="left:721.50px;top:99.14px;font:400 7.10px/8.52px 'Liberation Sans',sans-serif;color:#2f3a4a;transform:translateX(-50%) scaleX(0.9000);">01</div>
<div class="t" style="left:739.50px;top:99.14px;font:400 7.10px/8.52px 'Liberation Sans',sans-serif;color:#2f3a4a;transform:translateX(-50%) scaleX(0.9000);">02</div>
<div class="t" style="left:632.00px;top:117.14px;font:400 7.10px/8.52px 'Liberation Sans',sans-serif;color:#2f3a4a;transform:translateX(-50%) scaleX(0.9000);">03</div>
<div class="t" style="left:650.00px;top:117.14px;font:400 7.10px/8.52px 'Liberation Sans',sans-serif;color:#2f3a4a;transform:translateX(-50%) scaleX(0.9000);">04</div>
<div class="t" style="left:667.80px;top:117.14px;font:400 7.10px/8.52px 'Liberation Sans',sans-serif;color:#2f3a4a;transform:translateX(-50%) scaleX(0.9000);">05</div>
<div class="t" style="left:685.70px;top:117.14px;font:400 7.10px/8.52px 'Liberation Sans',sans-serif;color:#2f3a4a;transform:translateX(-50%) scaleX(0.9000);">06</div>
<div class="t" style="left:703.70px;top:117.14px;font:400 7.10px/8.52px 'Liberation Sans',sans-serif;color:#2f3a4a;transform:translateX(-50%) scaleX(0.9000);">07</div>
<div class="t" style="left:721.50px;top:117.14px;font:400 7.10px/8.52px 'Liberation Sans',sans-serif;color:#2f3a4a;transform:translateX(-50%) scaleX(0.9000);">08</div>
<div class="t" style="left:739.50px;top:117.14px;font:400 7.10px/8.52px 'Liberation Sans',sans-serif;color:#2f3a4a;transform:translateX(-50%) scaleX(0.9000);">09</div>
<div class="t" style="left:632.00px;top:135.14px;font:400 7.10px/8.52px 'Liberation Sans',sans-serif;color:#2f3a4a;transform:translateX(-50%) scaleX(0.9000);">10</div>
<div class="t" style="left:650.00px;top:135.14px;font:400 7.10px/8.52px 'Liberation Sans',sans-serif;color:#2f3a4a;transform:translateX(-50%) scaleX(0.9000);">11</div>
<div class="t" style="left:667.80px;top:135.14px;font:400 7.10px/8.52px 'Liberation Sans',sans-serif;color:#2f3a4a;transform:translateX(-50%) scaleX(0.9000);">12</div>
<div class="t" style="left:685.70px;top:135.14px;font:400 7.10px/8.52px 'Liberation Sans',sans-serif;color:#2f3a4a;transform:translateX(-50%) scaleX(0.9000);">13</div>
<div class="t" style="left:703.70px;top:135.14px;font:400 7.10px/8.52px 'Liberation Sans',sans-serif;color:#2f3a4a;transform:translateX(-50%) scaleX(0.9000);">14</div>
<div class="t" style="left:721.50px;top:135.14px;font:400 7.10px/8.52px 'Liberation Sans',sans-serif;color:#2f3a4a;transform:translateX(-50%) scaleX(0.9000);">15</div>
<div class="t" style="left:739.50px;top:135.14px;font:400 7.10px/8.52px 'Liberation Sans',sans-serif;color:#2f3a4a;transform:translateX(-50%) scaleX(0.9000);">16</div>
<div class="t" style="left:632.00px;top:153.14px;font:400 7.10px/8.52px 'Liberation Sans',sans-serif;color:#2f3a4a;transform:translateX(-50%) scaleX(0.9000);">17</div>
<div class="t" style="left:650.00px;top:153.14px;font:400 7.10px/8.52px 'Liberation Sans',sans-serif;color:#2f3a4a;transform:translateX(-50%) scaleX(0.9000);">18</div>
<div class="t" style="left:667.80px;top:153.14px;font:400 7.10px/8.52px 'Liberation Sans',sans-serif;color:#2f3a4a;transform:translateX(-50%) scaleX(0.9000);">19</div>
<div class="t" style="left:685.70px;top:153.14px;font:400 7.10px/8.52px 'Liberation Sans',sans-serif;color:#2f3a4a;transform:translateX(-50%) scaleX(0.9000);">20</div>
<div class="t" style="left:703.70px;top:153.14px;font:400 7.10px/8.52px 'Liberation Sans',sans-serif;color:#2f3a4a;transform:translateX(-50%) scaleX(0.9000);">21</div>
<div class="t" style="left:721.50px;top:153.14px;font:400 7.10px/8.52px 'Liberation Sans',sans-serif;color:#2f3a4a;transform:translateX(-50%) scaleX(0.9000);">22</div>
<div class="t" style="left:739.50px;top:153.14px;font:400 7.10px/8.52px 'Liberation Sans',sans-serif;color:#2f3a4a;transform:translateX(-50%) scaleX(0.9000);">13</div>
<div class="t" style="left:632.00px;top:171.14px;font:400 7.10px/8.52px 'Liberation Sans',sans-serif;color:#2f3a4a;transform:translateX(-50%) scaleX(0.9000);">24</div>
<div class="t" style="left:650.00px;top:171.14px;font:400 7.10px/8.52px 'Liberation Sans',sans-serif;color:#2f3a4a;transform:translateX(-50%) scaleX(0.9000);">25</div>
<div class="t" style="left:667.80px;top:171.14px;font:400 7.10px/8.52px 'Liberation Sans',sans-serif;color:#2f3a4a;transform:translateX(-50%) scaleX(0.9000);">26</div>
<div class="t" style="left:685.70px;top:171.14px;font:400 7.10px/8.52px 'Liberation Sans',sans-serif;color:#2f3a4a;transform:translateX(-50%) scaleX(0.9000);">27</div>
<div class="t" style="left:703.70px;top:171.14px;font:400 7.10px/8.52px 'Liberation Sans',sans-serif;color:#2f3a4a;transform:translateX(-50%) scaleX(0.9000);">28</div>
<div class="t" style="left:721.50px;top:171.14px;font:400 7.10px/8.52px 'Liberation Sans',sans-serif;color:#2f3a4a;transform:translateX(-50%) scaleX(0.9000);">29</div>
<div class="t" style="left:739.50px;top:171.14px;font:400 7.10px/8.52px 'Liberation Sans',sans-serif;color:#2f3a4a;transform:translateX(-50%) scaleX(0.9000);">30</div>
<svg class="s" width="768" height="432" viewBox="0 0 768 432"><circle cx="655.00" cy="96.90" r="1.05" fill="#f2cb4f"/><circle cx="690.70" cy="96.90" r="1.05" fill="#f2cb4f"/><circle cx="708.70" cy="96.90" r="1.05" fill="#f2cb4f"/><circle cx="637.00" cy="114.90" r="1.05" fill="#f2cb4f"/><circle cx="672.80" cy="114.90" r="1.05" fill="#f2cb4f"/><circle cx="708.70" cy="114.90" r="1.05" fill="#f2cb4f"/><circle cx="655.00" cy="132.80" r="1.05" fill="#f2cb4f"/><circle cx="672.80" cy="132.80" r="1.05" fill="#f2cb4f"/><circle cx="637.00" cy="150.80" r="1.05" fill="#f2cb4f"/><circle cx="672.80" cy="150.80" r="1.05" fill="#f2cb4f"/><circle cx="663.8" cy="192.2" r="0.95" fill="#f2cb4f"/></svg>
<div class="t" style="left:667.30px;top:190.20px;font:400 4.50px/5.40px 'Liberation Sans',sans-serif;color:#4d5866;transform:scaleX(0.9109);transform-origin:0 3.80px;">Pending Requests - 10</div>
<div class="t" style="left:624.20px;top:214.34px;font:700 7.60px/9.12px 'Liberation Sans',sans-serif;color:#3f4a5b;transform:scaleX(0.9152);transform-origin:0 6.66px;-webkit-text-stroke:.22px currentColor;">APPROVAL REQUESTS</div>
<div class="t" style="left:624.10px;top:233.12px;font:400 6.30px/7.56px 'Liberation Sans',sans-serif;color:#5b6672;transform:scaleX(0.9316);transform-origin:0 5.88px;">Emelie Konig has requested the</div>
<div class="t" style="left:624.10px;top:241.12px;font:400 6.30px/7.56px 'Liberation Sans',sans-serif;color:#5b6672;transform:scaleX(0.9430);transform-origin:0 5.88px;">17<span class="sup">th</span>-21<span class="sup">st</span> t.s for approval.</div>
<div class="t" style="left:624.10px;top:251.20px;font:400 4.50px/5.40px 'Liberation Sans',sans-serif;color:#b0b6be;transform:scaleX(1.1455);transform-origin:0 3.80px;">19/04</div>
<svg class="s" width="768" height="432" viewBox="0 0 768 432"><rect x="716.20" y="233.10" width="27.80" height="9.40" rx="1.00" fill="#1559b7"/></svg>
<div class="t" style="left:730.10px;top:235.50px;font:700 4.00px/4.80px 'Liberation Sans',sans-serif;color:#fff;transform:translateX(-50%);">APPROVE</div>
<svg class="s" width="768" height="432" viewBox="0 0 768 432"><rect x="716.50" y="245.90" width="27.20" height="8.80" rx="0.50" fill="#fff" stroke="#e66a72" stroke-width="0.60"/></svg>
<div class="t" style="left:730.10px;top:249.12px;font:700 3.80px/4.56px 'Liberation Sans',sans-serif;color:#d9343d;transform:translateX(-50%);">REJECT</div>
<svg class="s" width="768" height="432" viewBox="0 0 768 432"><rect x="624.20" y="260.40" width="119.80" height="0.60" fill="#e6e9ee"/></svg>
<div class="t" style="left:624.10px;top:269.12px;font:400 6.30px/7.56px 'Liberation Sans',sans-serif;color:#5b6672;transform:scaleX(0.9316);transform-origin:0 5.88px;">Emelie Konig has requested the</div>
<div class="t" style="left:624.10px;top:277.12px;font:400 6.30px/7.56px 'Liberation Sans',sans-serif;color:#5b6672;transform:scaleX(0.9430);transform-origin:0 5.88px;">17<span class="sup">th</span>-21<span class="sup">st</span> t.s for approval.</div>
<div class="t" style="left:624.10px;top:287.20px;font:400 4.50px/5.40px 'Liberation Sans',sans-serif;color:#b0b6be;transform:scaleX(1.1455);transform-origin:0 3.80px;">17/04</div>
<svg class="s" width="768" height="432" viewBox="0 0 768 432"><rect x="716.20" y="269.50" width="27.80" height="9.40" rx="1.00" fill="#1559b7"/></svg>
<div class="t" style="left:730.10px;top:272.50px;font:700 4.00px/4.80px 'Liberation Sans',sans-serif;color:#fff;transform:translateX(-50%);">APPROVE</div>
<svg class="s" width="768" height="432" viewBox="0 0 768 432"><rect x="716.50" y="282.30" width="27.20" height="8.80" rx="0.50" fill="#fff" stroke="#e66a72" stroke-width="0.60"/></svg>
<div class="t" style="left:730.10px;top:285.12px;font:700 3.80px/4.56px 'Liberation Sans',sans-serif;color:#d9343d;transform:translateX(-50%);">REJECT</div>
<svg class="s" width="768" height="432" viewBox="0 0 768 432"><rect x="624.20" y="296.80" width="119.80" height="0.60" fill="#e6e9ee"/></svg>
<div class="t" style="left:624.10px;top:306.12px;font:400 6.30px/7.56px 'Liberation Sans',sans-serif;color:#5b6672;transform:scaleX(0.9316);transform-origin:0 5.88px;">Emelie Konig has requested the</div>
<div class="t" style="left:624.10px;top:314.12px;font:400 6.30px/7.56px 'Liberation Sans',sans-serif;color:#5b6672;transform:scaleX(0.9430);transform-origin:0 5.88px;">17<span class="sup">th</span>-21<span class="sup">st</span> t.s for approval.</div>
<div class="t" style="left:624.10px;top:324.20px;font:400 4.50px/5.40px 'Liberation Sans',sans-serif;color:#b0b6be;transform:scaleX(1.1455);transform-origin:0 3.80px;">12/04</div>
<svg class="s" width="768" height="432" viewBox="0 0 768 432"><rect x="716.20" y="305.90" width="27.80" height="9.40" rx="1.00" fill="#1559b7"/></svg>
<div class="t" style="left:730.10px;top:308.50px;font:700 4.00px/4.80px 'Liberation Sans',sans-serif;color:#fff;transform:translateX(-50%);">APPROVE</div>
<svg class="s" width="768" height="432" viewBox="0 0 768 432"><rect x="716.50" y="318.70" width="27.20" height="8.80" rx="0.50" fill="#fff" stroke="#e66a72" stroke-width="0.60"/></svg>
<div class="t" style="left:730.10px;top:322.12px;font:700 3.80px/4.56px 'Liberation Sans',sans-serif;color:#d9343d;transform:translateX(-50%);">REJECT</div>
<svg class="s" width="768" height="432" viewBox="0 0 768 432"><rect x="624.20" y="333.20" width="119.80" height="0.60" fill="#e6e9ee"/></svg>
<div class="t" style="left:624.10px;top:342.12px;font:400 6.30px/7.56px 'Liberation Sans',sans-serif;color:#5b6672;transform:scaleX(0.9316);transform-origin:0 5.88px;">Emelie Konig has requested the</div>
<div class="t" style="left:624.10px;top:350.12px;font:400 6.30px/7.56px 'Liberation Sans',sans-serif;color:#5b6672;transform:scaleX(0.9430);transform-origin:0 5.88px;">17<span class="sup">th</span>-21<span class="sup">st</span> t.s for approval.</div>
<div class="t" style="left:624.10px;top:360.20px;font:400 4.50px/5.40px 'Liberation Sans',sans-serif;color:#b0b6be;transform:scaleX(1.1805);transform-origin:0 3.80px;">11/04</div>
<svg class="s" width="768" height="432" viewBox="0 0 768 432"><rect x="716.20" y="342.30" width="27.80" height="9.40" rx="1.00" fill="#1559b7"/></svg>
<div class="t" style="left:730.10px;top:345.50px;font:700 4.00px/4.80px 'Liberation Sans',sans-serif;color:#fff;transform:translateX(-50%);">APPROVE</div>
<svg class="s" width="768" height="432" viewBox="0 0 768 432"><rect x="716.50" y="355.10" width="27.20" height="8.80" rx="0.50" fill="#fff" stroke="#e66a72" stroke-width="0.60"/></svg>
<div class="t" style="left:730.10px;top:358.12px;font:700 3.80px/4.56px 'Liberation Sans',sans-serif;color:#d9343d;transform:translateX(-50%);">REJECT</div>
<svg class="s" width="768" height="432" viewBox="0 0 768 432"><rect x="624.20" y="369.60" width="119.80" height="0.60" fill="#e6e9ee"/></svg>
<div class="t" style="left:624.10px;top:379.12px;font:400 6.30px/7.56px 'Liberation Sans',sans-serif;color:#5b6672;transform:scaleX(0.9316);transform-origin:0 5.88px;">Emelie Konig has requested the</div>
<div class="t" style="left:624.10px;top:386.12px;font:400 6.30px/7.56px 'Liberation Sans',sans-serif;color:#5b6672;transform:scaleX(0.9430);transform-origin:0 5.88px;">17<span class="sup">th</span>-21<span class="sup">st</span> t.s for approval.</div>
<div class="t" style="left:624.10px;top:396.20px;font:400 4.50px/5.40px 'Liberation Sans',sans-serif;color:#b0b6be;transform:scaleX(1.1455);transform-origin:0 3.80px;">07/04</div>
<svg class="s" width="768" height="432" viewBox="0 0 768 432"><rect x="716.20" y="378.70" width="27.80" height="9.40" rx="1.00" fill="#1559b7"/></svg>
<div class="t" style="left:730.10px;top:381.50px;font:700 4.00px/4.80px 'Liberation Sans',sans-serif;color:#fff;transform:translateX(-50%);">APPROVE</div>
<svg class="s" width="768" height="432" viewBox="0 0 768 432"><rect x="716.50" y="391.50" width="27.20" height="8.80" rx="0.50" fill="#fff" stroke="#e66a72" stroke-width="0.60"/></svg>
<div class="t" style="left:730.10px;top:394.12px;font:700 3.80px/4.56px 'Liberation Sans',sans-serif;color:#d9343d;transform:translateX(-50%);">REJECT</div>
<svg class="s" width="768" height="432" viewBox="0 0 768 432"><rect x="624.20" y="406.00" width="119.80" height="0.60" fill="#e6e9ee"/><rect x="747.20" y="233.00" width="1.10" height="14.80" rx="1.00" fill="#c9ced6"/></svg>
</div></body></html>
